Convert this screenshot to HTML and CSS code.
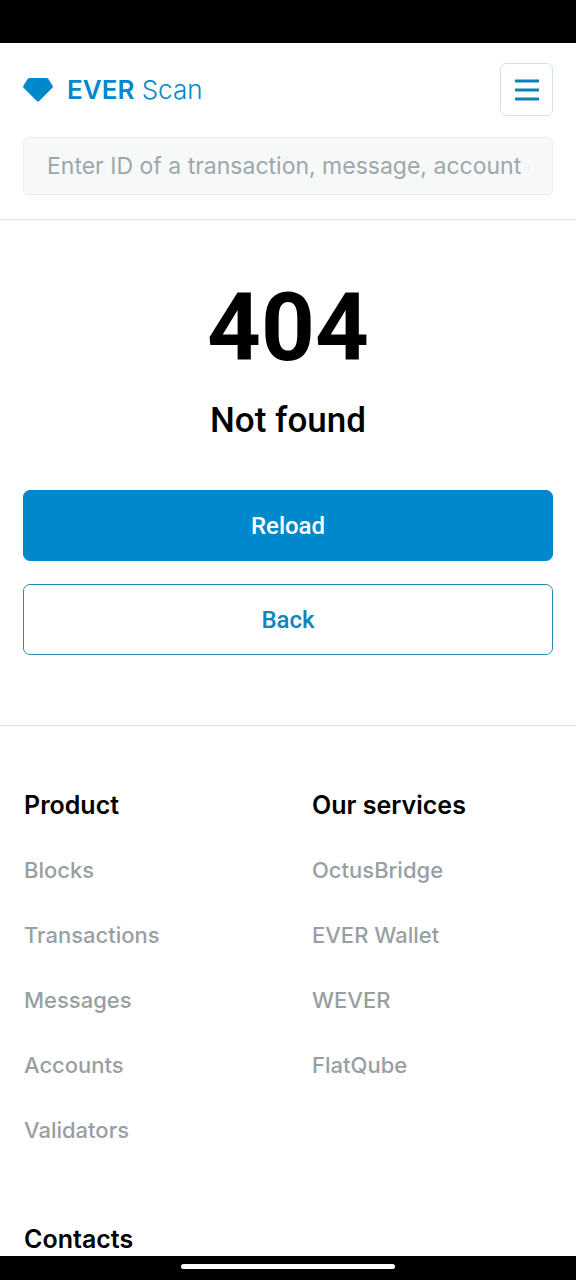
FILE: index.html
```html
<!DOCTYPE html>
<html lang="en">
<head>
<meta charset="utf-8">
<meta name="viewport" content="width=device-width, initial-scale=1">
<title>EVER Scan</title>
<link rel="stylesheet" href="styles.css">
</head>
<body class="page">
<div class="status-bar"></div>
<header class="header">
  <div class="header-row">
    <a class="logo" href="#">
      <svg class="logo-mark" viewBox="0 0 30 24" aria-hidden="true"><path d="M6.500 0H23.500Q24.500 0 25.200.8L29.500 7.600Q30.300 8.900 29.200 10L16.500 22.800Q15 24.200 13.500 22.800L.8 10Q-.3 8.900.5 7.600L4.800.8Q5.500 0 6.500 0Z"/></svg>
      <span class="logo-text"><strong class="logo-strong">EVER</strong> Scan</span>
    </a>
    <button class="menu-button" type="button" aria-label="Menu">
      <svg class="menu-icon" viewBox="0 0 24 22" aria-hidden="true"><path d="M0 2H24M0 11H24M0 20H24"/></svg>
    </button>
  </div>
  <input class="search" type="text" aria-label="Search" placeholder="Enter ID of a transaction, message, account or block">
</header>
<main class="main">
  <h1 class="code">404</h1>
  <p class="message">Not found</p>
  <div class="actions">
    <button class="button button-primary" type="button">Reload</button>
    <button class="button button-outline" type="button">Back</button>
  </div>
</main>
<footer class="footer">
  <nav class="column" aria-labelledby="product">
    <h2 class="column-title" id="product">Product</h2>
    <a class="link" href="#">Blocks</a>
    <a class="link" href="#">Transactions</a>
    <a class="link" href="#">Messages</a>
    <a class="link" href="#">Accounts</a>
    <a class="link" href="#">Validators</a>
  </nav>
  <nav class="column" aria-labelledby="services">
    <h2 class="column-title" id="services">Our services</h2>
    <a class="link" href="#">OctusBridge</a>
    <a class="link" href="#">EVER Wallet</a>
    <a class="link" href="#">WEVER</a>
    <a class="link" href="#">FlatQube</a>
  </nav>
  <section class="column">
    <h2 class="column-title">Contacts</h2>
  </section>
</footer>
<div class="gesture-bar"><div class="gesture-handle"></div></div>
</body>
</html>
```
FILE: styles.css
```css
* {
  box-sizing: border-box;
}

.page {
  margin: 0;
  background: #fff;
  color: #000;
  font-family: Inter, "Liberation Sans", sans-serif;
}

.status-bar {
  height: 43px;
  background: #000;
}

.header {
  padding: 20px 23px 24px;
  border-bottom: 1px solid #dfe1e2;
}

.header-row {
  display: flex;
  align-items: center;
  justify-content: space-between;
  margin-bottom: 21px;
}

.logo {
  display: flex;
  align-items: center;
  gap: 14px;
  color: #0088cc;
  text-decoration: none;
}

.logo-mark {
  width: 30px;
  height: 24px;
  fill: #0088cc;
}

.logo-text {
  font-size: 26px;
  font-weight: 300;
  line-height: 32px;
}

.logo-strong {
  font-weight: 600;
}

.menu-button {
  display: flex;
  align-items: center;
  justify-content: center;
  width: 53px;
  height: 53px;
  padding: 0;
  border: 1px solid #cfe4ea;
  border-radius: 6px;
  background: #fff;
}

.menu-icon {
  width: 24px;
  height: 22px;
  fill: none;
  stroke: #0f80b0;
  stroke-width: 3;
}

.search {
  display: block;
  width: 100%;
  height: 58px;
  padding: 0 23px;
  border: 1px solid #e9eeee;
  border-radius: 5px;
  background: #f7f9f9;
  color: #000;
  font: 400 23px "Inter", sans-serif;
}

.search::placeholder {
  color: #9da7ab;
  opacity: 1;
}

.main {
  padding: 61px 23px 70px;
  border-bottom: 1px solid #dfe1e2;
  font-family: Roboto, sans-serif;
  text-align: center;
}

.code {
  margin: 0 0 24px;
  font-size: 94px;
  font-weight: 700;
  line-height: 94px;
}

.message {
  margin: 0 0 47px;
  font-size: 35px;
  font-weight: 500;
  line-height: 44px;
}

.actions {
  display: flex;
  flex-direction: column;
  gap: 23px;
}

.button {
  height: 71px;
  border: 1px solid #0088cc;
  border-radius: 7px;
  font: 500 24px Roboto, sans-serif;
}

.button-primary {
  background: #0088cc;
  color: #fff;
}

.button-outline {
  border-color: #2b8aa8;
  background: #fff;
  color: #0f85bd;
}

.footer {
  display: grid;
  grid-template-columns: 1fr 1fr;
  row-gap: 78px;
  padding: 64px 0 0 24px;
}

.column {
  display: flex;
  flex-direction: column;
  align-items: flex-start;
  gap: 33px;
}

.column:nth-child(even) {
  padding-left: 12px;
}

.column-title {
  margin: 0;
  font-size: 25px;
  font-weight: 600;
  line-height: 31px;
}

.link {
  color: #989fa3;
  font-size: 22px;
  font-weight: 500;
  line-height: 32px;
  text-decoration: none;
}

.gesture-bar {
  position: fixed;
  right: 0;
  bottom: 0;
  left: 0;
  display: flex;
  justify-content: center;
  height: 24px;
  padding-top: 8px;
  background: #000;
}

.gesture-handle {
  width: 37%;
  height: 5px;
  border-radius: 3px;
  background: #fff;
}
```
